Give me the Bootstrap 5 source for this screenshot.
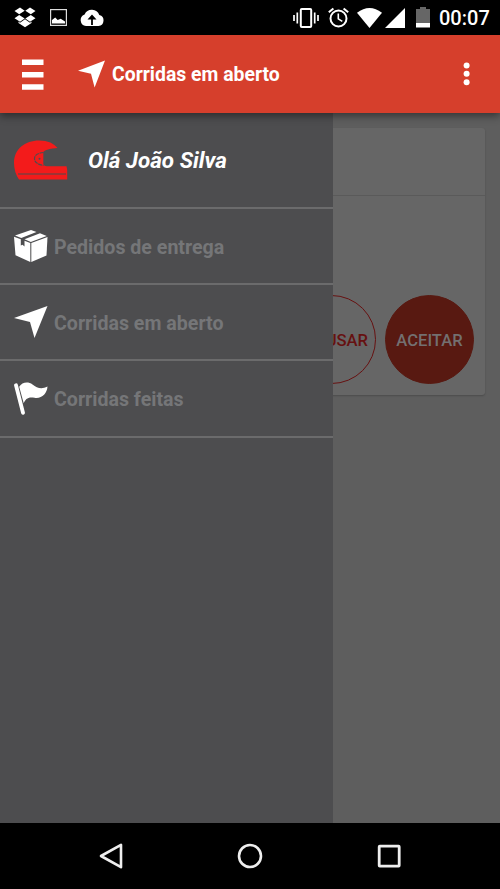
<!DOCTYPE html>
<html lang="pt-BR">
<head>
    <meta charset="UTF-8">
    <meta name="viewport" content="width=device-width, initial-scale=1">
    <title>Corridas em aberto</title>
    <link href="https://cdn.jsdelivr.net/npm/bootstrap@5.3.3/dist/css/bootstrap.min.css" rel="stylesheet">
    <style>
        body {
            width: 500px;
            height: 889px;
            background-color: #000;
            font-family: Roboto, "Liberation Sans", sans-serif;
        }

        svg {
            display: block;
            flex: none;
        }

        .status-bar {
            height: 35px;
            padding: 0 12px 0 14px;
        }

        .icon-image {
            margin: 0 13px 0 14px;
        }

        .icon-alarm {
            margin: 0 8px 0 9px;
        }

        .icon-signal {
            margin: 0 11px 0 3px;
        }

        .clock {
            font-size: 20px;
            font-weight: 500;
            line-height: 33px;
            padding-top: 2px;
            margin-left: 9px;
            width: 49px;
        }

        .app-bar {
            height: 78px;
            background-color: #d63f2c;
            padding: 0 28px 0 22px;
            z-index: 3;
            box-shadow: 0 3px 8px rgba(0, 0, 0, 0.45);
        }

        .icon-arrow {
            margin-left: 34px;
        }

        .app-title {
            font-size: 19.4px;
            margin-left: 7px;
            padding-top: 1px;
        }

        .content-area {
            height: 710px;
            background-color: #5e5e5e;
            padding: 15px;
        }

        .ride-card {
            height: 267px;
            background-color: #666;
            border-radius: 3px;
            box-shadow: 0 1px 2px rgba(0, 0, 0, 0.2);
        }

        .ride-head {
            height: 68px;
            border-bottom: 1px solid #5a5a5a;
        }

        .ride-actions {
            gap: 9px;
            padding: 0 11px 11px 0;
        }

        .btn-round {
            width: 89px;
            height: 89px;
            padding: 3px 0 0;
            border: 1.5px solid #611;
            color: #611;
            font-size: 16.6px;
            font-weight: 500;
        }

        .btn-accept {
            background-color: #581911;
            border-color: #581911;
            color: #737070;
        }

        .drawer {
            width: 333px;
            background-color: #4d4d4f;
        }

        .drawer-item {
            height: 76.4px;
            padding-left: 14px;
            gap: 6px;
            border-bottom: 2px solid #6b6b6c;
            color: #757678;
            font-size: 19.6px;
            font-weight: 700;
        }

        .drawer-item span {
            padding-top: 3px;
        }

        .drawer-user {
            height: 95.5px;
            gap: 20px;
            color: #fff;
            font-size: 22.4px;
            font-style: italic;
        }

        .nav-keys {
            height: 66px;
            padding: 0 99px;
        }
    </style>
</head>
<body class="overflow-hidden">
    <div class="status-bar d-flex align-items-center text-white">
        <svg width="22" height="21" viewBox="0 0 22 21" fill="#fff">
            <path d="M6 .6 10.7 3.7 5.2 7.3.5 4ZM16 .6 11.3 3.7 16.8 7.3 21.5 4ZM5.2 7.9 10.7 11.5 6 14.8.5 11.2ZM16.8 7.9 11.3 11.5 16 14.8 21.5 11.2Z"/>
            <path d="M4.5 14.6 6 15.7 11 12.3 16 15.7 17.5 14.6V16L11 20.3 4.5 16Z"/>
        </svg>
        <svg class="icon-image" width="17" height="17" viewBox="0 0 17 17">
            <rect x=".6" y=".6" width="15.8" height="15.8" fill="none" stroke="#ddd" stroke-width="1.2"/>
            <path d="M2 14.5v-3.5l3.2-2.6 2.5 2.6 3-1.2 4.3 2.7v2Z" fill="#fff"/>
        </svg>
        <svg width="24" height="17" viewBox="0 0 24 17">
            <path d="M6 17A6 6 0 0 1 4.6 5.4 8 8 0 0 1 19.3 6 5.6 5.6 0 0 1 18.5 17Z" fill="#fff"/>
            <path d="M12 5.5 16.5 10.5H12.9V16H11.1V10.5H7.5Z" fill="#000"/>
        </svg>
        <svg class="ms-auto" width="26" height="20" viewBox="0 0 26 20" fill="none" stroke="#fff">
            <rect x="7.8" y="1" width="10.4" height="18" rx="1" stroke-width="2"/>
            <path d="M1 7v6M4.3 4.5v11M25 7v6M21.7 4.5v11" stroke-width="1.7"/>
        </svg>
        <svg class="icon-alarm" width="21" height="21" viewBox="0 0 21 21" fill="none" stroke="#fff">
            <circle cx="10.5" cy="11.5" r="8" stroke-width="2"/>
            <path d="M.8 5.2 5.4 1.4M20.2 5.2 15.6 1.4" stroke-width="2"/>
            <path d="M10.3 6.5v5.4l4 2.5" stroke-width="1.6"/>
        </svg>
        <svg width="25" height="20" viewBox="0 0 25 20"><path d="M0 4.8Q12.5-4.8 25 4.8L12.5 20Z" fill="#fff"/></svg>
        <svg class="icon-signal" width="20" height="20" viewBox="0 0 20 20"><path d="M20 0V20H0Z" fill="#fff"/></svg>
        <svg width="14" height="21" viewBox="0 0 14 21">
            <path d="M0 2h4V0h6v2h4v14H0Z" fill="#666"/>
            <path d="M0 16h14v4.5H0Z" fill="#fff"/>
        </svg>
        <span class="clock">00:07</span>
    </div>

    <header class="app-bar position-relative d-flex align-items-center text-white">
        <svg width="22" height="32" viewBox="0 0 22 32" fill="#fff"><path d="M0 1.5h21.5V7H0ZM0 14h21.5v5.5H0ZM0 26.3h21.5v5.5H0Z"/></svg>
        <svg class="icon-arrow" width="27" height="28" viewBox="0 0 27 28"><path d="M27 .5 16.6 27.5 13 13.8 0 10.8Z" fill="#fff"/></svg>
        <span class="app-title fw-bold">Corridas em aberto</span>
        <svg class="ms-auto" width="10" height="26" viewBox="0 0 10 26" fill="#fff">
            <circle cx="4.6" cy="4.4" r="3"/><circle cx="4.6" cy="12.8" r="3"/><circle cx="4.6" cy="21.2" r="3"/>
        </svg>
    </header>

    <main class="content-area position-relative">
        <div class="ride-card d-flex flex-column">
            <div class="ride-head"></div>
            <div class="ride-actions d-flex justify-content-end mt-auto">
                <button class="btn btn-round rounded-circle" type="button">RECUSAR</button>
                <button class="btn btn-round btn-accept rounded-circle" type="button">ACEITAR</button>
            </div>
        </div>

        <!-- side menu lies over the ride list -->
        <nav class="drawer position-absolute top-0 start-0 h-100">
            <div class="drawer-item drawer-user d-flex align-items-center">
                <svg width="54" height="40" viewBox="0 0 54 40">
                    <path d="M5 39.5Q0 32 0 23C0 9 11 .5 25 .5 34 .5 40 3.5 43.5 8 37 8.3 32 9.5 29.3 12V23.5Q29.5 26.3 33 26.3H52.5L53.2 30V39.5Z" fill="#f31b1b"/>
                    <path d="M29.5 12.5Q20.5 13.5 20.5 18.7T29.5 25.5" fill="none" stroke="#4d4d4f" stroke-width="1.2" stroke-dasharray="4 .7"/>
                    <circle cx="25.5" cy="18.7" r="1" fill="#4d4d4f"/>
                    <path d="M4 34H52" stroke="#4d4d4f" stroke-width="1.2"/>
                </svg>
                <span>Olá João Silva</span>
            </div>
            <div class="drawer-item d-flex align-items-center">
                <svg width="34" height="32" viewBox="0 0 34 32" fill="#fff">
                    <path d="M0 6.7 6.8 9.3V15.5L8.5 14.8 10.5 16.5V10.8L16.3 13V32L1.5 25.3Z"/>
                    <path d="M17.3 13 33.5 7 32.5 25.5 17.3 32Z"/>
                    <path d="M1 5.5 17 0 22.5 2 7.3 8Z"/>
                    <path d="M10.5 9.3 26 3.3 32.7 6 16.8 12Z"/>
                </svg>
                <span>Pedidos de entrega</span>
            </div>
            <div class="drawer-item d-flex align-items-center">
                <svg width="34" height="32" viewBox="0 0 34 32"><path d="M33.5 0 20.5 32 16 16 0 12Z" fill="#fff"/></svg>
                <span>Corridas em aberto</span>
            </div>
            <div class="drawer-item d-flex align-items-center">
                <svg width="34" height="34" viewBox="0 0 34 34">
                    <path d="M2 4.3 9 31.8" stroke="#fff" stroke-width="3.8" stroke-linecap="round"/>
                    <path d="M5.2 5.8C8 1 14 0 18.5 3.4S27 9 33.5 5.6C33 13 27.5 18 20.5 16.8 14 15.5 11.5 18 9.7 22.2Z" fill="#fff"/>
                </svg>
                <span>Corridas feitas</span>
            </div>
        </nav>
    </main>

    <footer class="nav-keys d-flex align-items-center justify-content-between">
        <svg width="24" height="26" viewBox="0 0 24 26"><path d="M22 1.8V24.2L2 13Z" fill="none" stroke="#eee" stroke-width="2.6" stroke-linejoin="round"/></svg>
        <svg width="26" height="26" viewBox="0 0 26 26"><circle cx="13" cy="13" r="11" fill="none" stroke="#eee" stroke-width="2.6"/></svg>
        <svg width="24" height="24" viewBox="0 0 24 24"><rect x="2.2" y="2.2" width="20" height="20" rx=".6" fill="none" stroke="#eee" stroke-width="2.8"/></svg>
    </footer>

    <script src="https://cdn.jsdelivr.net/npm/bootstrap@5.3.3/dist/js/bootstrap.bundle.min.js"></script>
</body>
</html>
